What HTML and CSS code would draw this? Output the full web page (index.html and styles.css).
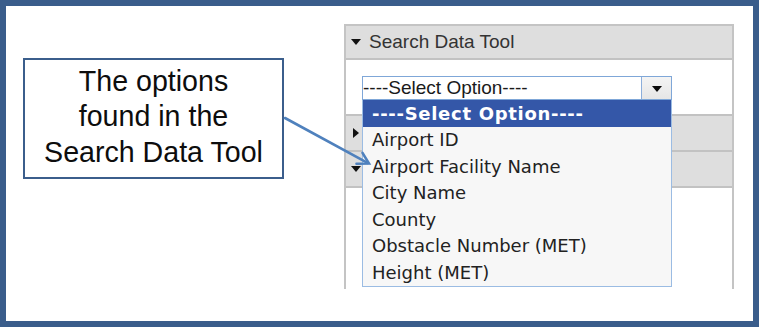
FILE: index.html
```html
<!DOCTYPE html>
<html>
<head>
<meta charset="utf-8">
<link rel="stylesheet" href="styles.css">
</head>
<body>
<div class="frame">
  <div class="callout">The options<br>found in the<br>Search Data Tool</div>
  <div class="panel">
    <div class="ph ph-first"><span class="tri-down"></span><span class="ph-title">Search Data Tool</span></div>
    <div class="pbody">
      <div class="select">
        <span class="sel-text">----Select Option----</span>
        <span class="sel-btn"><span class="tri-btn"></span></span>
        <ul class="list">
          <li class="item selected">----Select Option----</li>
          <li class="item">Airport ID</li>
          <li class="item">Airport Facility Name</li>
          <li class="item">City Name</li>
          <li class="item">County</li>
          <li class="item">Obstacle Number (MET)</li>
          <li class="item">Height (MET)</li>
        </ul>
      </div>
    </div>
    <div class="ph"><span class="tri-right"></span></div>
    <div class="ph"><span class="tri-down"></span></div>
    <div class="pbody fill"></div>
  </div>
  <svg class="arrow" width="759" height="327" viewBox="0 0 759 327">
    <path d="M285 118 L367.5 162.8" stroke="#4F81BD" stroke-width="2.6" fill="none" stroke-linecap="round"/>
    <path d="M356.5 163.8 L369 163.6 L362.5 152.8" stroke="#4F81BD" stroke-width="2.6" fill="none" stroke-linecap="round" stroke-linejoin="miter"/>
  </svg>
</div>
</body>
</html>
```
FILE: styles.css
```css
html, body {
  margin: 0;
  padding: 0;
  background: #ffffff;
}

.frame {
  position: relative;
  width: 759px;
  height: 327px;
  box-sizing: border-box;
  border: 6px solid #3A5D8B;
  background: #ffffff;
  display: flex;
  align-items: flex-start;
  padding: 18px 0 0 17px;
}

.callout {
  margin-top: 34px;
  width: 261px;
  height: 121px;
  box-sizing: border-box;
  border: 2px solid #3B5E8C;
  padding-top: 4px;
  text-align: center;
  font-family: "Liberation Sans", Arial, sans-serif;
  font-size: 28.6px;
  line-height: 35.3px;
  color: #0d0d0d;
}

.panel {
  margin-left: 60px;
  width: 390px;
  height: 265px;
  box-sizing: border-box;
  border: 2px solid #C4C4C4;
  border-bottom: none;
  display: flex;
  flex-direction: column;
  background: #ffffff;
}

.ph {
  height: 34px;
  flex: none;
  background: #DEDEDE;
  border-bottom: 2px solid #C2C2C2;
  display: flex;
  align-items: center;
  padding-left: 5px;
  font-family: "Liberation Sans", Arial, sans-serif;
  font-size: 19px;
  color: #333333;
}

.ph-first {
  height: 32px;
}

.tri-down {
  width: 0;
  height: 0;
  border-left: 5px solid transparent;
  border-right: 5px solid transparent;
  border-top: 6px solid #111111;
  margin-right: 8px;
}

.tri-right {
  width: 0;
  height: 0;
  border-top: 5px solid transparent;
  border-bottom: 5px solid transparent;
  border-left: 6px solid #111111;
  margin-left: 2px;
}

.ph-title {
  line-height: 22px;
}

.pbody {
  height: 56px;
  flex: none;
  background: #ffffff;
  border-bottom: 2px solid #C2C2C2;
  padding: 16px 0 0 16px;
  box-sizing: border-box;
}

.pbody.fill {
  flex: 1;
  border-bottom: none;
}

.select {
  position: relative;
  width: 310px;
  height: 24px;
  box-sizing: border-box;
  border: 1px solid #7FA7D8;
  display: flex;
  background: #ffffff;
}

.sel-text {
  flex: 1;
  font-family: "Liberation Sans", Arial, sans-serif;
  font-size: 19px;
  line-height: 22px;
  color: #1a1a1a;
  white-space: nowrap;
  overflow: hidden;
}

.sel-btn {
  width: 29px;
  flex: none;
  border-left: 1px solid #8CAEDB;
  background: linear-gradient(#F4F4F4, #E6E6E6);
  display: flex;
  align-items: center;
  justify-content: center;
}

.tri-btn {
  width: 0;
  height: 0;
  border-left: 5px solid transparent;
  border-right: 5px solid transparent;
  border-top: 6px solid #0a0a0a;
  margin-top: 1px;
}

.list {
  position: absolute;
  left: -1px;
  top: 23px;
  width: 310px;
  height: 187px;
  box-sizing: border-box;
  margin: 0;
  padding: 0;
  list-style: none;
  background: #F7F7F7;
  border: 1px solid #9BBCE3;
  border-top: none;
}

.item {
  height: 26.6px;
  line-height: 26.6px;
  padding-left: 9px;
  font-family: "DejaVu Sans", Verdana, sans-serif;
  font-size: 18px;
  color: #222222;
  white-space: nowrap;
}

.item.selected {
  background: #3457A8;
  color: #ffffff;
  font-weight: bold;
  letter-spacing: 0.7px;
  height: 27px;
  line-height: 27px;
}

.arrow {
  position: absolute;
  left: -6px;
  top: -6px;
  pointer-events: none;
}
```
